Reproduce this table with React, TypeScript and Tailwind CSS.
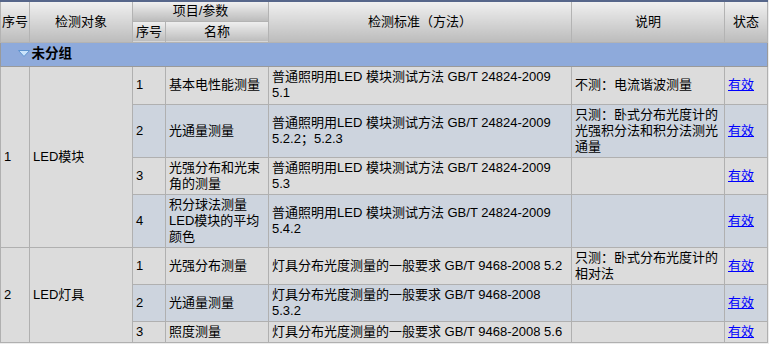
import { FC, ReactNode } from 'react'

type Item = {
  no: number
  name: ReactNode
  standard: ReactNode
  note?: ReactNode
  h: string
}

type Group = {
  no: number
  target: string
  items: Item[]
}

const groups: Group[] = [
  {
    no: 1,
    target: 'LED模块',
    items: [
      {
        no: 1,
        name: '基本电性能测量',
        standard: (
          <>
            普通照明用LED 模块测试方法 GB/T 24824-2009
            <br />
            5.1
          </>
        ),
        note: '不测：电流谐波测量',
        h: 'h-[38px]',
      },
      {
        no: 2,
        name: '光通量测量',
        standard: (
          <>
            普通照明用LED 模块测试方法 GB/T 24824-2009
            <br />
            5.2.2；5.2.3
          </>
        ),
        note: (
          <>
            只测：卧式分布光度计的
            <br />
            光强积分法和积分法测光
            <br />
            通量
          </>
        ),
        h: 'h-[53px]',
      },
      {
        no: 3,
        name: (
          <>
            光强分布和光束
            <br />
            角的测量
          </>
        ),
        standard: (
          <>
            普通照明用LED 模块测试方法 GB/T 24824-2009
            <br />
            5.3
          </>
        ),
        h: 'h-[37px]',
      },
      {
        no: 4,
        name: (
          <>
            积分球法测量
            <br />
            LED模块的平均
            <br />
            颜色
          </>
        ),
        standard: (
          <>
            普通照明用LED 模块测试方法 GB/T 24824-2009
            <br />
            5.4.2
          </>
        ),
        h: 'h-[53px]',
      },
    ],
  },
  {
    no: 2,
    target: 'LED灯具',
    items: [
      {
        no: 1,
        name: '光强分布测量',
        standard: '灯具分布光度测量的一般要求 GB/T 9468-2008 5.2',
        note: (
          <>
            只测：卧式分布光度计的
            <br />
            相对法
          </>
        ),
        h: 'h-[37px]',
      },
      {
        no: 2,
        name: '光通量测量',
        standard: (
          <>
            灯具分布光度测量的一般要求 GB/T 9468-2008
            <br />
            5.3.2
          </>
        ),
        h: 'h-[37px]',
      },
      {
        no: 3,
        name: '照度测量',
        standard: '灯具分布光度测量的一般要求 GB/T 9468-2008 5.6',
        h: 'h-[21px]',
      },
    ],
  },
]

const th = 'border border-[#b3b3b3] bg-linear-to-b from-[#f0f0f0] to-[#bcbcbc] font-normal text-center align-middle p-0'
const td = 'border border-[#b0b0b0] px-[3px] py-0 align-middle whitespace-nowrap overflow-hidden'

const App: FC = () => {
  let stripe = 0
  return (
    <div className="w-[769px] h-[344px] bg-[#ececec] overflow-hidden">
      <table
        className="table-fixed border-collapse w-[767px] border-t-2 border-t-[#56668a] border-l border-l-[#8a8a8a] text-[13px] leading-4 text-black"
        style={{ fontFamily: '"Liberation Sans", "Noto Sans CJK SC", sans-serif' }}
      >
        <colgroup>
          <col className="w-[29px]" />
          <col className="w-[103px]" />
          <col className="w-[33px]" />
          <col className="w-[103px]" />
          <col className="w-[303px]" />
          <col className="w-[153px]" />
          <col className="w-[43px]" />
        </colgroup>
        <thead>
          <tr className="h-[20px]">
            <th rowSpan={2} className={th}>序号</th>
            <th rowSpan={2} className={th}>检测对象</th>
            <th colSpan={2} className={th}>项目/参数</th>
            <th rowSpan={2} className={th}>检测标准（方法）</th>
            <th rowSpan={2} className={th}>说明</th>
            <th rowSpan={2} className={th}>状态</th>
          </tr>
          <tr className="h-[21px]">
            <th className={th}>序号</th>
            <th className={th}>名称</th>
          </tr>
        </thead>
        <tbody>
          {/* group header: toggle arrow in the first column, title from the second */}
          <tr className="h-[24px] bg-[#8eaadb]">
            <td className="border border-[#9a9a9a] border-r-0 p-0 text-right align-middle">
              <svg width="12" height="7" viewBox="0 0 12 7" className="inline-block -mt-[3px]">
                <polygon points="0.5,0.5 11.5,0.5 6,6.5" fill="#c9e3fb" stroke="#5e93cf" strokeWidth="1" />
              </svg>
            </td>
            <td colSpan={6} className="border border-[#9a9a9a] border-l-0 py-0 pl-[2px] align-middle font-bold text-[13.5px]">
              未分组
            </td>
          </tr>
          {groups.map((g) =>
            g.items.map((it, i) => {
              const bg = stripe++ % 2 === 0 ? 'bg-[#dcdcdc]' : 'bg-[#cdd4de]'
              return (
                <tr key={`${g.no}-${it.no}`} className={`${it.h} ${bg}`}>
                  {i === 0 && (
                    <>
                      <td rowSpan={g.items.length} className={`${td} bg-[#dcdcdc]`}>
                        {g.no}
                      </td>
                      <td rowSpan={g.items.length} className={`${td} bg-[#dcdcdc]`}>
                        {g.target}
                      </td>
                    </>
                  )}
                  <td className={td}>{it.no}</td>
                  <td className={td}>{it.name}</td>
                  <td className={td}>{it.standard}</td>
                  <td className={td}>{it.note}</td>
                  <td className={td}>
                    <a href="#" className="text-[#0000ff] underline">
                      有效
                    </a>
                  </td>
                </tr>
              )
            })
          )}
        </tbody>
      </table>
    </div>
  )
}

export default App
